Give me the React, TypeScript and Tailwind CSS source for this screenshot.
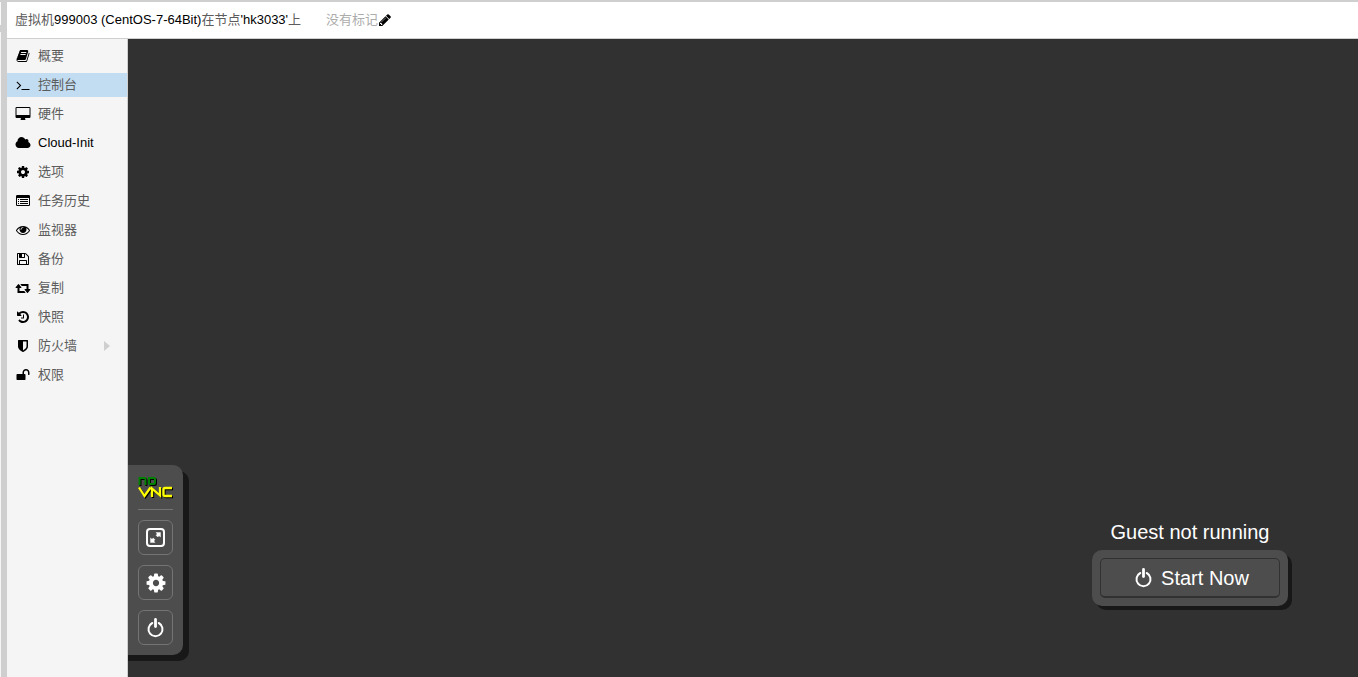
import type { ReactNode } from "react";

type IconProps = { d: string; viewBox?: string; className?: string };

function Icon({ d, viewBox = "0 0 1792 1792", className = "h-[14px] w-[16px]" }: IconProps) {
  return (
    <svg viewBox={viewBox} className={className} fill="currentColor" aria-hidden="true">
      <path d={d} />
    </svg>
  );
}

const WIDE = "-64 0 1920 1792";

const PENCIL =
  "M491 1536l91-91-235-235-91 91v107h128v128h107zm523-928q0-22-22-22-10 0-17 7l-542 542q-7 7-7 17 0 22 22 22 10 0 17-7l542-542q7-7 7-17zm-54-192l416 416-832 832h-416v-416zm683 96q0 53-37 90l-166 166-416-416 166-165q36-38 90-38 53 0 91 38l235 234q37 39 37 91z";
const COG =
  "M1152 896q0-106-75-181t-181-75-181 75-75 181 75 181 181 75 181-75 75-181zm512-109v222q0 12-8 23t-20 13l-185 28q-19 54-39 91 35 50 107 138 10 12 10 25t-9 23q-27 37-99 108t-94 71q-12 0-26-9l-138-108q-44 23-91 38-16 136-29 186-7 28-36 28h-222q-14 0-24.5-8.5t-11.5-21.5l-28-184q-49-16-90-37l-141 107q-10 9-25 9-14 0-25-11-126-114-165-168-7-10-7-23 0-12 8-23 15-21 51-66.5t54-70.5q-27-50-41-99l-183-27q-13-2-21-12.5t-8-23.5v-222q0-12 8-23t19-13l186-28q14-46 39-92-40-57-107-138-10-12-10-24 0-10 9-23 26-36 98.5-107.5t94.5-71.5q13 0 26 10l138 107q44-23 91-38 16-136 29-186 7-28 36-28h222q14 0 24.5 8.5t11.5 21.5l28 184q49 16 90 37l142-107q9-9 24-9 13 0 25 10 129 119 165 170 7 8 7 22 0 12-8 23-15 21-51 66.5t-54 70.5q26 50 41 98l183 28q13 2 21 12.5t8 23.5z";

type Item = { label: string; d: string; viewBox?: string; active?: boolean; latin?: boolean; expandable?: boolean };

const items: Item[] = [
  {
    label: "概要",
    d: "M1703 478q40 57 18 129l-275 906q-19 64-76.5 107.5t-122.5 43.5h-923q-77 0-148.5-53.5t-99.5-131.5q-24-67-2-127 0-4 3-27t4-37q1-8-3-21.5t-3-19.5q2-11 8-21t16.5-23.5 16.5-23.5q23-38 45-91.5t30-91.5q3-10 .5-30t-.5-28q3-11 17-28t17-23q21-36 42-92t25-90q1-9-2.5-32t.5-28q4-13 22-30.5t22-22.5q19-26 42.5-84.5t27.5-96.5q1-8-3-25.5t-2-26.5q2-8 9-18t18-23 17-21q8-12 16.5-30.5t15-35 16-36 19.5-32 26.5-23.5 36-11.5 47.5 5.5l-1 3q38-9 51-9h761q74 0 114 56t18 130l-274 906q-36 119-71.5 153.5t-128.5 34.5h-869q-27 0-38 15-11 16-1 43 24 70 144 70h923q29 0 56-15.5t35-41.5l300-987q7-22 5-57 38 15 59 43zm-1064 2q-4 13 2 22.5t20 9.5h608q13 0 25.5-9.5t16.5-22.5l21-64q4-13-2-22.5t-20-9.5h-608q-13 0-25.5 9.5t-16.5 22.5zm-83 256q-4 13 2 22.5t20 9.5h608q13 0 25.5-9.5t16.5-22.5l21-64q4-13-2-22.5t-20-9.5h-608q-13 0-25.5 9.5t-16.5 22.5z",
  },
  {
    label: "控制台",
    active: true,
    d: "M649 983l-466 466q-10 10-23 10t-23-10l-50-50q-10-10-10-23t10-23l393-393-393-393q-10-10-10-23t10-23l50-50q10-10 23-10t23 10l466 466q10 10 10 23t-10 23zm1079 457v64q0 14-9 23t-23 9h-960q-14 0-23-9t-9-23v-64q0-14 9-23t23-9h960q14 0 23 9t9 23z",
  },
  {
    label: "硬件",
    viewBox: WIDE,
    d: "M1728 992v-832q0-13-9.5-22.5t-22.5-9.5h-1600q-13 0-22.5 9.5t-9.5 22.5v832q0 13 9.5 22.5t22.5 9.5h1600q13 0 22.5-9.5t9.5-22.5zm128-832v1088q0 66-47 113t-113 47h-544q0 37 16 77.5t32 71 16 43.5q0 26-19 45t-45 19h-512q-26 0-45-19t-19-45q0-14 16-44t32-70 16-78h-544q-66 0-113-47t-47-113v-1088q0-66 47-113t113-47h1600q66 0 113 47t47 113z",
  },
  {
    label: "Cloud-Init",
    latin: true,
    viewBox: "64 0 1920 1792",
    d: "M1984 1152q0 159-112.5 271.5t-271.5 112.5h-1088q-185 0-316.5-131.5t-131.5-316.5q0-132 71-241.5t187-163.5q-2-28-2-43 0-212 150-362t362-150q158 0 286.5 88t187.5 230q70-62 166-62 106 0 181 75t75 181q0 75-41 138 129 30 213 134.5t84 239.5z",
  },
  { label: "选项", d: COG },
  {
    label: "任务历史",
    d: "M160 128h1472q160 0 160 160v1088q0 160-160 160h-1472q-160 0-160-160v-1088q0-160 160-160zM128 512v864q0 32 32 32h1472q32 0 32-32v-864zM256 640h128v128h-128zM512 640h1024v128h-1024zM256 896h128v128h-128zM512 896h1024v128h-1024zM256 1152h128v128h-128zM512 1152h1024v128h-1024z",
  },
  {
    label: "监视器",
    d: "M1664 960q-152-236-381-353 61 104 61 225 0 185-131.5 316.5t-316.5 131.5-316.5-131.5-131.5-316.5q0-121 61-225-229 117-381 353 133 205 333.5 326.5t434.5 121.5 434.5-121.5 333.5-326.5zm-720-384q0-20-14-34t-34-14q-125 0-214.5 89.5t-89.5 214.5q0 20 14 34t34 14 34-14 14-34q0-86 61-147t147-61q20 0 34-14t14-34zm848 384q0 34-20 69-140 230-376.5 368.5t-499.5 138.5-499.5-139-376.5-368q-20-35-20-69t20-69q140-229 376.5-368t499.5-139 499.5 139 376.5 368q20 35 20 69z",
  },
  {
    label: "备份",
    d: "M512 1536h768v-384h-768v384zm896 0h128v-896q0-14-10-38.5t-20-34.5l-281-281q-10-10-34-20t-39-10v416q0 40-28 68t-68 28h-576q-40 0-68-28t-28-68v-416h-128v1280h128v-416q0-40 28-68t68-28h832q40 0 68 28t28 68v416zm-384-928v-320q0-13-9.5-22.5t-22.5-9.5h-192q-13 0-22.5 9.5t-9.5 22.5v320q0 13 9.5 22.5t22.5 9.5h192q13 0 22.5-9.5t9.5-22.5zm640 32v928q0 40-28 68t-68 28h-1344q-40 0-68-28t-28-68v-1344q0-40 28-68t68-28h928q40 0 88 20t76 48l280 280q28 28 48 76t20 88z",
  },
  {
    label: "复制",
    viewBox: WIDE,
    d: "M1216 1504q0 13-9.5 22.5t-22.5 9.5h-960q-8 0-13.5-2t-9-7-5.5-8-3-11.5-1-11.5v-600h-192q-26 0-45-19t-19-45q0-24 15-41l320-384q19-22 49-22t49 22l320 384q15 17 15 41 0 26-19 45t-45 19h-192v384h576q16 0 25 11l160 192q7 10 7 21zm640-416q0 24-15 41l-320 384q-20 23-49 23t-49-23l-320-384q-15-17-15-41 0-26 19-45t45-19h192v-384h-576q-16 0-25-12l-160-192q-7-9-7-20 0-13 9.5-22.5t22.5-9.5h960q8 0 13.5 2t9 7 5.5 8 3 11.5 1 11.5v600h192q26 0 45 19t19 45z",
  },
  {
    label: "快照",
    d: "M1664 896q0 156-61 298t-164 245-245 164-298 61q-172 0-327-72.5t-264-204.5q-7-10-6.5-22.5t8.5-20.5l137-138q10-9 25-9 16 2 23 12 73 95 179 147t225 52q104 0 198.5-40.5t163.5-109.5 109.5-163.5 40.5-198.5-40.5-198.5-109.5-163.5-163.5-109.5-198.5-40.5q-98 0-188 35.5t-160 101.5l137 138q31 30 14 69-17 40-59 40h-448q-26 0-45-19t-19-45v-448q0-42 40-59 39-17 69 14l130 129q107-101 244.5-156.5t284.5-55.5q156 0 298 61t245 164 164 245 61 298zm-640-288v448q0 14-9 23t-23 9h-320q-14 0-23-9t-9-23v-64q0-14 9-23t23-9h224v-352q0-14 9-23t23-9h64q14 0 23 9t9 23z",
  },
  {
    label: "防火墙",
    expandable: true,
    d: "M1344 960v-640h-448v1137q119-63 213-137 235-184 235-360zm192-768v768q0 86-33.5 170.5t-83 150-118 127.5-126.5 103-121 77.5-89.5 49.5-42.5 20q-12 6-26 6t-26-6q-16-7-42.5-20t-89.5-49.5-121-77.5-126.5-103-118-127.5-83-150-33.5-170.5v-768q0-26 19-45t45-19h1152q26 0 45 19t19 45z",
  },
  {
    label: "权限",
    d: "M1728 576v256q0 26-19 45t-45 19h-64q-26 0-45-19t-19-45v-256q0-106-75-181t-181-75-181 75-75 181v192h96q40 0 68 28t28 68v576q0 40-28 68t-68 28h-960q-40 0-68-28t-28-68v-576q0-40 28-68t68-28h672v-192q0-185 131.5-316.5t316.5-131.5 316.5 131.5 131.5 316.5z",
  },
];

function PowerIcon() {
  return (
    <svg viewBox="0 0 20 20" className="size-5" fill="none" stroke="currentColor" aria-hidden="true">
      <path d="M6.300 5A7 7 0 1 0 12.700 5" strokeWidth="2" strokeLinecap="round" />
      <path d="M9.500 1.500V8.500" strokeWidth="2.800" strokeLinecap="round" />
    </svg>
  );
}

function FullscreenIcon() {
  return (
    <svg viewBox="0 0 20 20" className="size-5" aria-hidden="true">
      <rect x="1" y="1" width="17" height="17" rx="3" fill="none" stroke="#fff" strokeWidth="2" />
      <path
        d="M10 4.500H14.500V9L13 7.800L11.800 9L10 7.200L11.200 6zM9 14.500H4.500V10L6 11.200L7.200 10L9 11.800L7.800 13z"
        fill="#fff"
        stroke="#fff"
        strokeWidth=".4"
      />
    </svg>
  );
}

function NoVncLogo() {
  const no = "M1.500 10V3H6.500Q7.500 3 7.500 4V10M11 3H16Q17 3 17 4V8Q17 9 16 9H12Q11 9 11 8Z";
  const vnc = "M1 12.500L6.500 21L12.500 12.500M14 22V13.500L22 20.500V12M34 13H27Q25.500 13 25.500 14.500V19.500Q25.500 21 27 21H34";
  return (
    <svg viewBox="0 0 36 24" className="h-6 w-9 shrink-0" fill="none" role="img" aria-label="noVNC">
      <g stroke="#000" transform="translate(1 1)">
        <path d={no} strokeWidth="2" />
        <path d={vnc} strokeWidth="2.300" />
      </g>
      <path d={no} stroke="#008000" strokeWidth="2" />
      <path d={vnc} stroke="#ff0" strokeWidth="2.300" />
    </svg>
  );
}

function BarButton({ label, children }: { label: string; children: ReactNode }) {
  return (
    <button
      type="button"
      aria-label={label}
      className="flex size-[35px] items-center justify-center rounded-md border border-[#747474] text-white"
    >
      {children}
    </button>
  );
}

export default function App() {
  return (
    <div className="flex min-h-screen border-t-2 border-[#cfcfcf] bg-white font-['Liberation_Sans','Noto_Sans_CJK_SC',sans-serif] text-[13px] leading-5 text-black">
      <div className="flex w-px shrink-0 flex-col bg-[#cfcfcf]">
        <div className="h-[23px] bg-[#f9f9f9]" />
        <div className="mt-[7px] grow bg-[#f5f5f5]" />
      </div>
      <div className="flex min-w-0 grow flex-col border-l-[6px] border-[#cfcfcf]">
        <header className="flex h-[37px] items-center border-b border-[#cfcfcf] pl-2">
          <h1 className="text-[13px] font-normal">
            <span className="text-[#5c5c5c]">虚拟机</span>999003 (CentOS-7-64Bit)
            <span className="text-[#5c5c5c]">在节点</span>'hk3033'
            <span className="text-[#5c5c5c]">上</span>
          </h1>
          <div className="ml-[25px] flex items-center text-[#acacac]">
            没有标记
            <button type="button" aria-label="编辑标记" className="text-black">
              <Icon d={PENCIL} className="size-[14px]" />
            </button>
          </div>
        </header>
        <div className="flex grow">
          <nav className="w-[121px] shrink-0 border-r border-[#cfcfcf] bg-[#f5f5f5] pt-[5px]">
            <ul className="flex flex-col gap-[5px]">
              {items.map((item) => (
                <li key={item.label}>
                  <a
                    href="#"
                    className={
                      item.active
                        ? "flex h-6 items-center gap-[7px] bg-[#c2ddf2] pr-[17px] pl-2"
                        : "flex h-6 items-center gap-[7px] pr-[17px] pl-2"
                    }
                  >
                    <Icon d={item.d} viewBox={item.viewBox} />
                    <span className={item.latin ? "grow" : "grow text-[#5c5c5c]"}>{item.label}</span>
                    {item.expandable && (
                      <svg viewBox="0 0 6 10" className="h-[10px] w-[6px]" fill="#cfcfcf" aria-hidden="true">
                        <path d="M0 0L6 5L0 10Z" />
                      </svg>
                    )}
                  </a>
                </li>
              ))}
            </ul>
          </nav>
          <main className="flex grow items-end justify-between bg-[#313131] font-['Liberation_Sans',Arial,sans-serif]">
            <div className="mb-[22px] flex flex-col items-center gap-[10px] rounded-r-[10px] bg-[#4d4d4d] p-[10px] shadow-[6px_6px_0_#181818,0_6px_0_#181818]">
              <div className="flex size-[35px] items-start border-b border-[#747474]">
                <NoVncLogo />
              </div>
              <BarButton label="Fullscreen">
                <FullscreenIcon />
              </BarButton>
              <BarButton label="Settings">
                <Icon d={COG} className="size-[22px]" />
              </BarButton>
              <BarButton label="Power">
                <PowerIcon />
              </BarButton>
            </div>
            <section className="mr-[70px] mb-[71px] flex flex-col items-center gap-1">
              <p className="text-xl leading-7 text-white">Guest not running</p>
              <div className="rounded-[10px] bg-[#4d4d4d] p-2 shadow-[4px_4px_0_#181818]">
                <button
                  type="button"
                  className="flex h-10 w-[180px] items-center justify-center gap-[7px] rounded-[5px] border border-b-2 border-[#313131] pl-[3px] text-xl text-white"
                >
                  <PowerIcon />
                  Start Now
                </button>
              </div>
            </section>
          </main>
        </div>
      </div>
    </div>
  );
}
